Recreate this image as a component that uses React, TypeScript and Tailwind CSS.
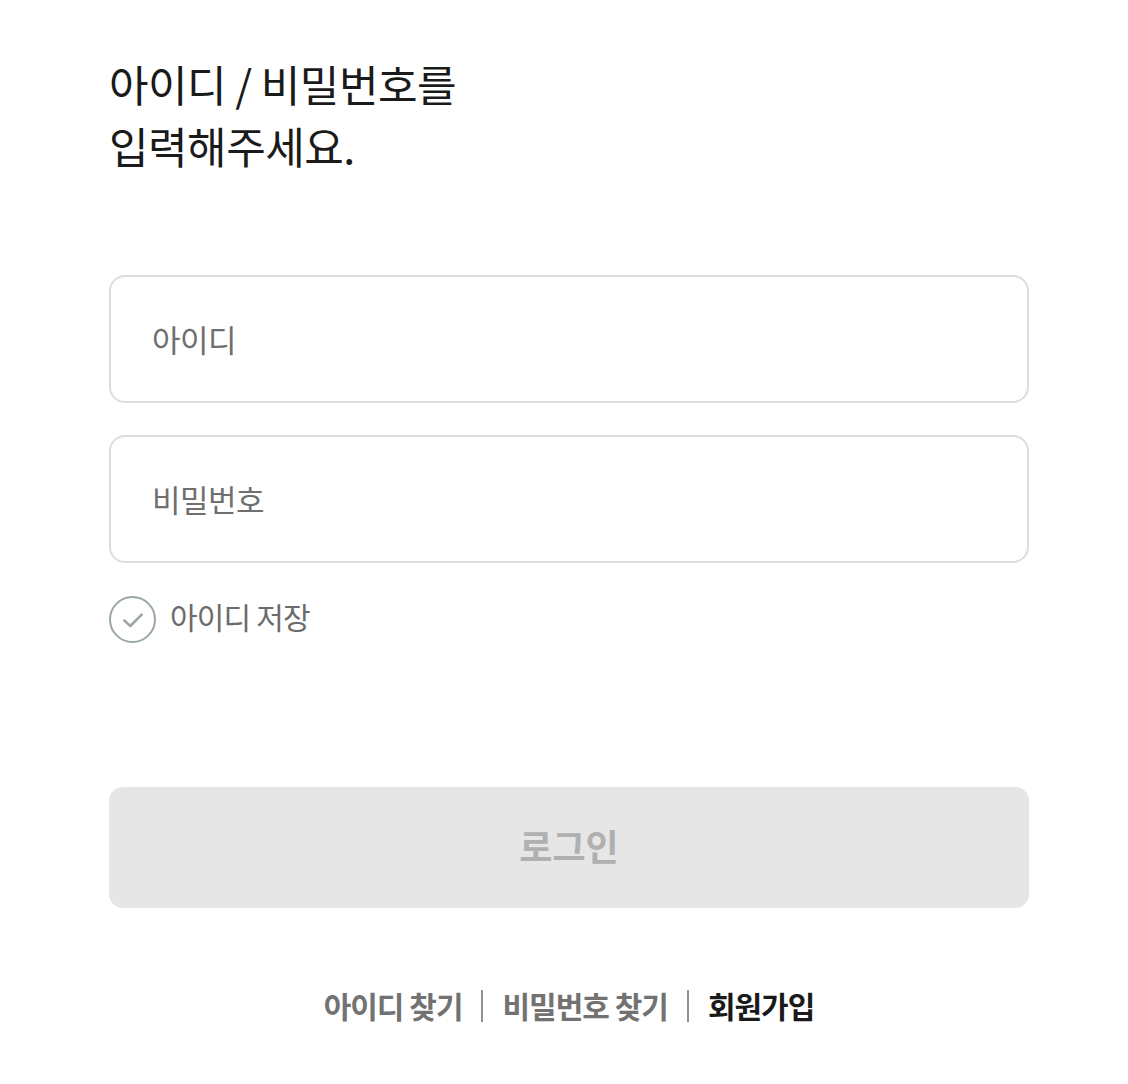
import React from "react";

export default function App() {
  const font = { fontFamily: '"Noto Sans CJK KR", "Noto Sans", sans-serif' };
  return (
    <div className="min-h-[1084px] w-full bg-white" style={font}>
      <div className="ml-[109px] w-[920px] pt-[52px]">
        <h1 className="text-[43px] leading-[62px] font-normal tracking-[-0.5px] text-[#1a1a1a]">
          아이디 / 비밀번호를
          <br />
          입력해주세요.
        </h1>
        <div className="mt-[99px] flex flex-col gap-[32px]">
          <div className="flex h-[128px] items-center rounded-[16px] border-2 border-[#dddddd] px-[41px]">
            <span className="text-[31px] leading-[40px] tracking-[-0.5px] text-[#6f6f6f]">아이디</span>
          </div>
          <div className="flex h-[128px] items-center rounded-[16px] border-2 border-[#dddddd] px-[41px]">
            <span className="text-[31px] leading-[40px] tracking-[-0.5px] text-[#6f6f6f]">비밀번호</span>
          </div>
        </div>
        <div className="mt-[33px] flex items-center gap-[14px]">
          <div className="flex h-[47px] w-[47px] items-center justify-center rounded-full border-2 border-[#9aa8a4]">
            <svg width="26" height="26" viewBox="0 0 24 24" fill="none">
              <path d="M4 12.5 L9.5 17.5 L20 7" stroke="#9aa8a4" strokeWidth="2.4" strokeLinecap="round" strokeLinejoin="round" />
            </svg>
          </div>
          <span className="-mt-[6px] text-[30px] text-[#6b6b6b] tracking-[-0.8px]">아이디 저장</span>
        </div>
        <button className="mt-[144px] flex h-[121px] w-full items-center justify-center rounded-[14px] bg-[#e6e6e6]">
          <span className="-mt-[6px] text-[36px] font-bold text-[#b0b0b0]">로그인</span>
        </button>
        <div className="mt-[75px] flex items-center justify-center text-[30px] font-bold tracking-[-1px]">
          <span className="text-[#727272]">아이디 찾기</span>
          <span className="mx-[19px] h-[32px] w-[2px] bg-[#909090]" />
          <span className="text-[#727272]">비밀번호 찾기</span>
          <span className="mx-[19px] h-[32px] w-[2px] bg-[#909090]" />
          <span className="text-[#1a1a1a]">회원가입</span>
        </div>
      </div>
    </div>
  );
}
